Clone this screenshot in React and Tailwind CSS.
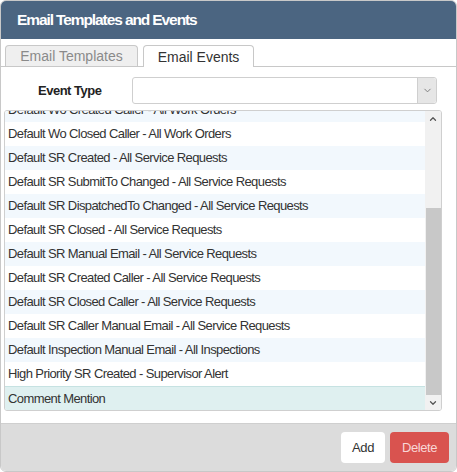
import { ChevronDown, ChevronUp } from "lucide-react";

const events = [
  "Default Wo Created Caller - All Work Orders",
  "Default Wo Closed Caller - All Work Orders",
  "Default SR Created - All Service Requests",
  "Default SR SubmitTo Changed - All Service Requests",
  "Default SR DispatchedTo Changed - All Service Requests",
  "Default SR Closed - All Service Requests",
  "Default SR Manual Email - All Service Requests",
  "Default SR Created Caller - All Service Requests",
  "Default SR Closed Caller - All Service Requests",
  "Default SR Caller Manual Email - All Service Requests",
  "Default Inspection Manual Email - All Inspections",
  "High Priority SR Created - Supervisor Alert",
  "Comment Mention",
];

export default function App() {
  const selected = "Comment Mention";

  return (
    <div className="w-[457px] h-[472px] bg-white [font-family:'Liberation_Sans',Arial,sans-serif] text-[#333]">
      <div className="flex flex-col h-full border border-[#c8c8c8] rounded-md overflow-hidden">
        {/* Header */}
        <div className="h-[38px] shrink-0 bg-[#4b6581] flex items-center pl-[16px]">
          <h1 className="text-white font-bold text-[15.5px] tracking-[-1.1px]">Email Templates and Events</h1>
        </div>

        {/* Tabs */}
        <div className="flex items-end gap-[5px] pl-[4px] h-[28px] shrink-0 border-b border-[#c8c8c8]">
          <button className="h-[21px] w-[133px] bg-[#efefef] border border-b-0 border-[#c8c8c8] rounded-t-[4px] text-[14px] text-[#8a8a8a] leading-none">
            Email Templates
          </button>
          <button className="h-[22px] w-[111px] -mb-px bg-white border border-b-0 border-[#c8c8c8] rounded-t-[4px] text-[14px] text-[#333] leading-none">
            Email Events
          </button>
        </div>

        {/* Event type */}
        <div className="flex items-center mt-[10px] h-[27px] shrink-0">
          <label className="w-[131px] pl-[37px] font-bold text-[13px] tracking-[-0.5px] text-[#222]">Event Type</label>
          <div className="flex w-[305px] h-[27px] border border-[#cfcfcf] rounded-[3px] bg-white">
            <div className="flex-1" />
            <div className="w-[19px] h-full bg-[#e6e6e6] border-l border-[#cfcfcf] flex items-center justify-center rounded-r-[3px]">
              <ChevronDown className="w-[11px] h-[11px] text-[#777]" strokeWidth={2} />
            </div>
          </div>
        </div>

        {/* List */}
        <div className="mt-[6px] ml-[3px] w-[438px] h-[301px] shrink-0 border border-[#cfcfcf] rounded-[3px] flex overflow-hidden">
          <div className="flex-1 overflow-hidden">
            <div className="-mt-[13px]">
              {events.map((e, i) => {
                const isSel = e === selected;
                return (
                  <div
                    key={e}
                    className={
                      "h-[24px] flex items-center pl-[3px] text-[13px] tracking-[-0.6px] " +
                      (isSel
                        ? "bg-[#dff0f0] border-t border-[#c6e2e2]"
                        : i % 2 === 0
                        ? "bg-[#f2f8fd]"
                        : "bg-white")
                    }
                  >
                    {e}
                  </div>
                );
              })}
            </div>
          </div>
          <div className="w-[16px] bg-[#f1f1f1] flex flex-col items-center">
            <div className="h-[16px] flex items-center justify-center">
              <ChevronUp className="w-[10px] h-[10px] text-[#555]" strokeWidth={3} />
            </div>
            <div className="h-[81px]" />
            <div className="w-[15px] h-[187px] bg-[#c8c8c8]" />
            <div className="flex-1 flex items-center justify-center">
              <ChevronDown className="w-[10px] h-[10px] text-[#555]" strokeWidth={3} />
            </div>
          </div>
        </div>

        <div className="flex-1" />

        {/* Footer */}
        <div className="h-[48px] shrink-0 bg-[#dcdcdc] border-t border-[#cfcfcf] flex items-start justify-end gap-[5px] pt-[8px] pr-[7px]">
          <button className="h-[31px] w-[44px] bg-white rounded-[4px] text-[13px] tracking-[-0.4px] text-[#333]">Add</button>
          <button className="h-[31px] w-[59px] bg-[#d9534f] rounded-[4px] text-[13px] tracking-[-0.4px] text-[#f8d7d6]">Delete</button>
        </div>
      </div>
    </div>
  );
}
